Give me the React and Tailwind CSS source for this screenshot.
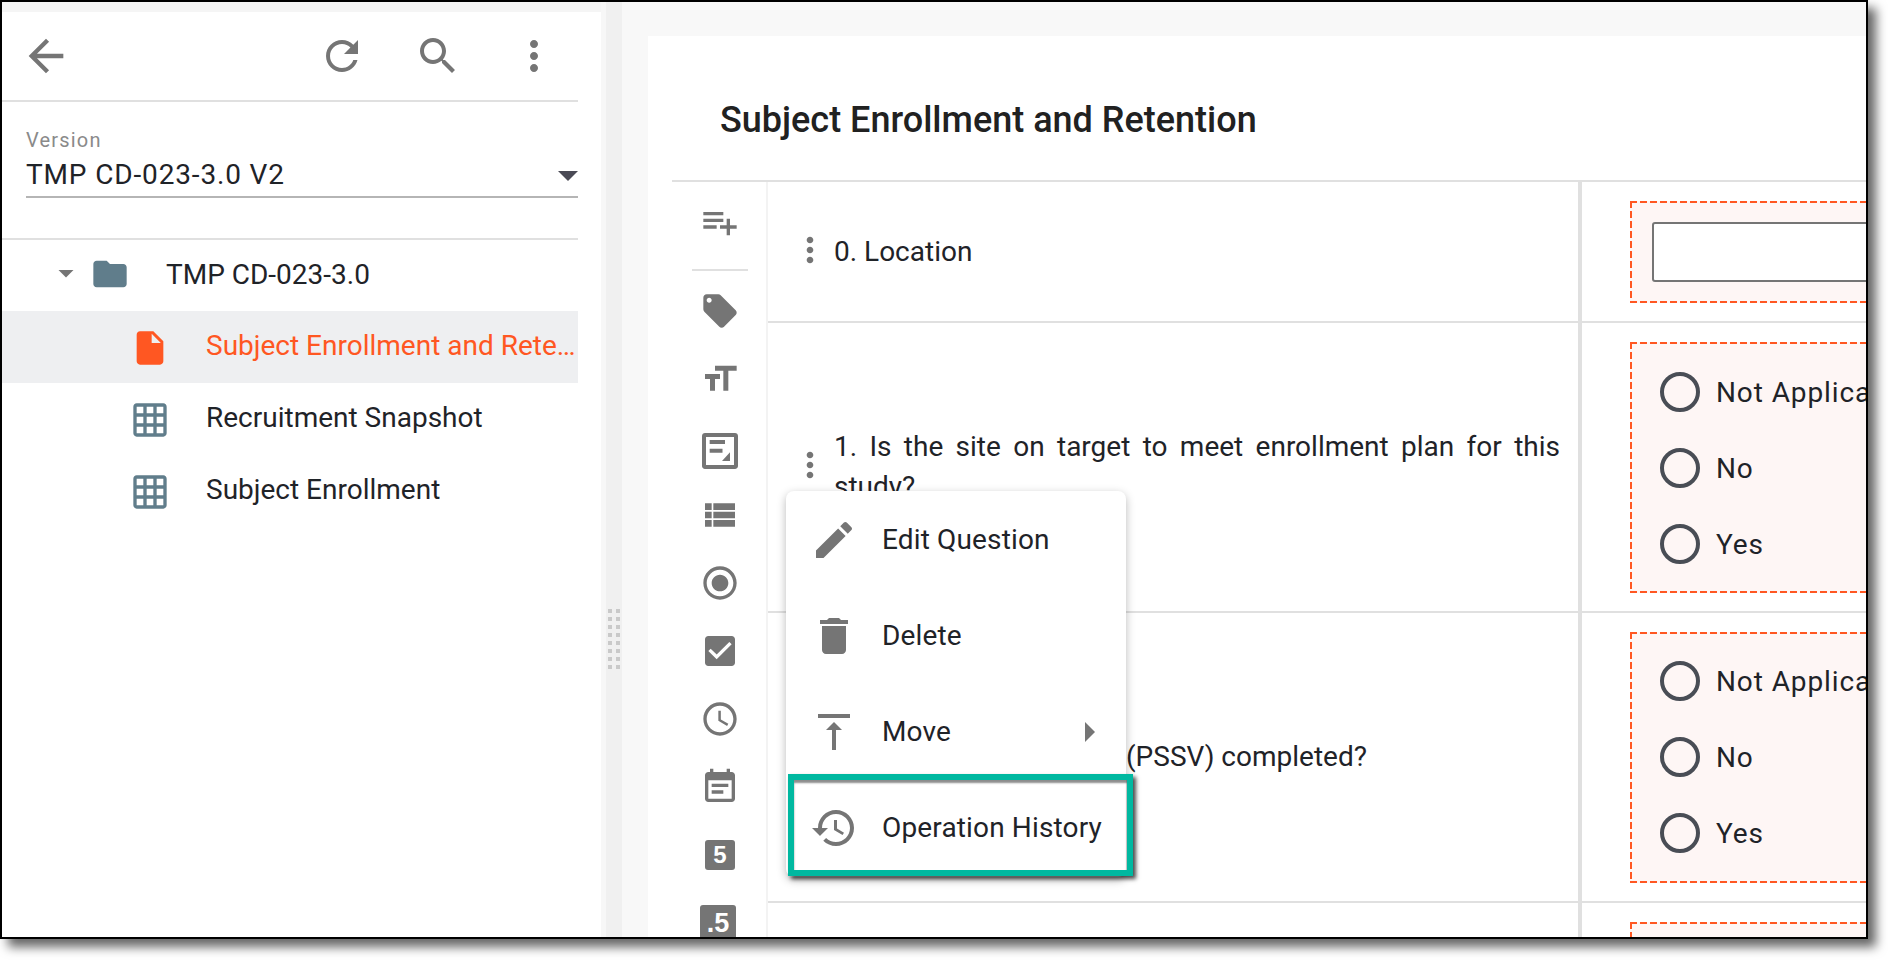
const P = {
  back: "M20 11H7.83l5.59-5.59L12 4l-8 8 8 8 1.41-1.41L7.83 13H20v-2z",
  refresh: "M17.65 6.35C16.2 4.9 14.21 4 12 4c-4.42 0-7.99 3.58-7.99 8s3.57 8 7.99 8c3.73 0 6.84-2.55 7.73-6h-2.08c-.82 2.33-3.04 4-5.65 4-3.31 0-6-2.69-6-6s2.69-6 6-6c1.66 0 3.14.69 4.22 1.78L13 11h7V4l-2.35 2.35z",
  search: "M15.5 14h-.79l-.28-.27C15.41 12.59 16 11.11 16 9.5 16 5.91 13.09 3 9.5 3S3 5.91 3 9.5 5.91 16 9.5 16c1.61 0 3.09-.59 4.23-1.57l.27.28v.79l5 4.99L20.49 19l-4.99-5zm-6 0C7.01 14 5 11.99 5 9.5S7.01 5 9.5 5 14 7.01 14 9.5 11.99 14 9.5 14z",
  more: "M12 8c1.1 0 2-.9 2-2s-.9-2-2-2-2 .9-2 2 .9 2 2 2zm0 2c-1.1 0-2 .9-2 2s.9 2 2 2 2-.9 2-2-.9-2-2-2zm0 6c-1.1 0-2 .9-2 2s.9 2 2 2 2-.9 2-2-.9-2-2-2z",
  drop: "M7 10l5 5 5-5z",
  folder: "M10 4H4c-1.1 0-1.99.9-1.99 2L2 18c0 1.1.9 2 2 2h16c1.1 0 2-.9 2-2V8c0-1.1-.9-2-2-2h-8l-2-2z",
  file: "M6 2c-1.1 0-1.99.9-1.99 2L4 20c0 1.1.89 2 1.99 2H18c1.1 0 2-.9 2-2V8l-6-6H6zm7 7V3.5L18.5 9H13z",
  grid: "M20 2H4c-1.1 0-2 .9-2 2v16c0 1.1.9 2 2 2h16c1.1 0 2-.9 2-2V4c0-1.1-.9-2-2-2zM8 20H4v-4h4v4zm0-6H4v-4h4v4zm0-6H4V4h4v4zm6 12h-4v-4h4v4zm0-6h-4v-4h4v4zm0-6h-4V4h4v4zm6 12h-4v-4h4v4zm0-6h-4v-4h4v4zm0-6h-4V4h4v4z",
  playlist: "M14 10H2v2h12v-2zm0-4H2v2h12V6zm4 8v-4h-2v4h-4v2h4v4h2v-4h4v-2h-4zM2 16h8v-2H2v2z",
  tag: "M21.41 11.58l-9-9C12.05 2.22 11.55 2 11 2H4c-1.1 0-2 .9-2 2v7c0 .55.22 1.05.59 1.42l9 9c.36.36.86.58 1.41.58.55 0 1.05-.22 1.41-.59l7-7c.37-.36.59-.86.59-1.41 0-.55-.23-1.06-.59-1.42zM5.5 7C4.67 7 4 6.33 4 5.5S4.67 4 5.5 4 7 4.67 7 5.5 6.33 7 5.5 7z",
  size: "M9 4v3h5v12h3V7h5V4H9zm-6 8h3v7h3v-7h3V9H3v3z",
  form: "M21 1.2H3c-1 0-1.8.8-1.8 1.8v18c0 1 .8 1.8 1.8 1.8h18c1 0 1.8-.8 1.8-1.8V3c0-1-.8-1.8-1.8-1.8zM20.4 20.4H3.6V3.6h16.8v16.8zM5.8 5.4H15v2.4H5.8V5.4zm0 5.2h7.7V13H5.8v-2.4zM18 12.8V18h-4.8l4.8-5.2z",
  list: "M3 14h4v-4H3v4zm0 5h4v-4H3v4zM3 9h4V5H3v4zm5 5h13v-4H8v4zm0 5h13v-4H8v4zM8 5v4h13V5H8z",
  radio: "M12 7c-2.76 0-5 2.24-5 5s2.24 5 5 5 5-2.24 5-5-2.24-5-5-5zm0-5C6.48 2 2 6.48 2 12s4.48 10 10 10 10-4.48 10-10S17.52 2 12 2zm0 18c-4.42 0-8-3.58-8-8s3.58-8 8-8 8 3.58 8 8-3.58 8-8 8z",
  check: "M19 3H5c-1.11 0-2 .9-2 2v14c0 1.1.89 2 2 2h14c1.11 0 2-.9 2-2V5c0-1.1-.89-2-2-2zm-9 14l-5-5 1.41-1.41L10 14.17l7.59-7.59L19 8l-9 9z",
  clock: "M11.99 2C6.47 2 2 6.48 2 12s4.47 10 9.99 10C17.52 22 22 17.52 22 12S17.52 2 11.99 2zM12 20c-4.42 0-8-3.58-8-8s3.58-8 8-8 8 3.58 8 8-3.58 8-8 8zm.5-13H11v6l5.25 3.15.75-1.23-4.5-2.67z",
  event: "M17 10H7v2h10v-2zm2-7h-1V1h-2v2H8V1H6v2H5c-1.11 0-1.99.9-1.99 2L3 19c0 1.1.89 2 2 2h14c1.1 0 2-.9 2-2V5c0-1.1-.9-2-2-2zm0 16H5V8h14v11zm-5-5H7v2h7v-2z",
  edit: "M3 17.25V21h3.75L17.81 9.94l-3.75-3.75L3 17.25zM20.71 7.04c.39-.39.39-1.02 0-1.41l-2.34-2.34c-.39-.39-1.02-.39-1.41 0l-1.83 1.83 3.75 3.75 1.83-1.83z",
  del: "M6 19c0 1.1.9 2 2 2h8c1.1 0 2-.9 2-2V7H6v12zM19 4h-3.5l-1-1h-5l-1 1H5v2h14V4z",
  top: "M8 11h3v10h2V11h3l-4-4-4 4zM4 3v2h16V3H4z",
  right: "M10 17l5-5-5-5v10z",
  history: "M13 3c-4.97 0-9 4.03-9 9H1l3.89 3.89.07.14L9 12H6c0-3.87 3.13-7 7-7s7 3.13 7 7-3.13 7-7 7c-1.93 0-3.68-.79-4.94-2.06l-1.42 1.42C8.27 19.99 10.51 21 13 21c4.97 0 9-4.03 9-9s-4.03-9-9-9zm-1 5v5l4.28 2.54.72-1.21-3.5-2.08V8H12z",
};

function Icon({ d, className }) {
  return (
    <svg viewBox="0 0 24 24" fill="currentColor" className={className}>
      <path d={d} />
    </svg>
  );
}

function TreeRow({ icon, iconColor, label, active }) {
  return (
    <div className={`flex h-[72px] items-center pl-[128px] pr-[2px] ${active ? "bg-[#eeeff1]" : ""}`}>
      <Icon d={icon} className={`mt-0.5 h-10 w-10 shrink-0 ${iconColor}`} />
      <span className={`ml-[36px] -mt-[3px] min-w-0 truncate text-[28px] ${active ? "text-[#ff5722]" : "text-[#1f2328]"}`}>
        {label}
      </span>
    </div>
  );
}

function LeftPanel() {
  return (
    <div className="mt-2.5 w-[599px] shrink-0 bg-white pr-[23px]">
      <div className="flex h-[88px] items-center pl-[18px] text-[#757575]">
        <Icon d={P.back} className="h-[52px] w-[52px]" />
        <div className="ml-auto flex items-center gap-12 pr-5">
          <Icon d={P.refresh} className="h-12 w-12" />
          <Icon d={P.search} className="h-12 w-12" />
          <Icon d={P.more} className="h-12 w-12" />
        </div>
      </div>
      <div className="h-0.5 bg-[#e0e0e0]" />
      <div className="h-[136px] pl-6 pt-[25px]">
        <div className="text-[20px] leading-[26px] tracking-[1.2px] text-[#8a8a8a]">Version</div>
        <div className="flex h-[45px] items-center justify-between border-b-2 border-[#b5b5b5]">
          <span className="text-[28px] tracking-[0.85px] text-[#1f2328]">TMP CD-023-3.0 V2</span>
          <Icon d={P.drop} className="-mr-3.5 h-12 w-12 shrink-0 text-[#4a4a55]" />
        </div>
      </div>
      <div className="h-0.5 bg-[#e0e0e0]" />
      <div className="flex h-[71px] items-center pl-[46px]">
        <Icon d={P.drop} className="-mt-1.5 h-9 w-9 shrink-0 text-[#757575]" />
        <Icon d={P.folder} className="ml-[6px] -mt-1 h-10 w-10 shrink-0 text-[#607d8b]" />
        <span className="-mt-0.5 ml-9 text-[28px] text-[#1f2328]">TMP CD-023-3.0</span>
      </div>
      <TreeRow icon={P.file} iconColor="text-[#ff5722]" label="Subject Enrollment and Retention" active />
      <TreeRow icon={P.grid} iconColor="text-[#607d8b]" label="Recruitment Snapshot" />
      <TreeRow icon={P.grid} iconColor="text-[#607d8b]" label="Subject Enrollment" />
    </div>
  );
}

function Splitter() {
  return (
    <div className="flex w-[21px] shrink-0 justify-center border-l-[5px] border-[#f7f7f7] bg-[#f0f0f0] pt-[607px]">
      <div className="grid h-[60px] grid-cols-2 content-start gap-1">
        {Array.from({ length: 16 }).map((_, i) => (
          <div key={i} className="h-1 w-1 bg-[#c9c9c9]" />
        ))}
      </div>
    </div>
  );
}

function ToolIcon({ d, extra = "" }) {
  return (
    <div className="flex h-[68px] items-center justify-center">
      <Icon d={d} className={`h-10 w-10 text-[#757575] ${extra}`} />
    </div>
  );
}

function NumIcon({ label, wide }) {
  return (
    <div className="flex h-[68px] items-center justify-center">
      <div
        className={`flex items-center justify-center rounded-[3px] bg-[#757575] font-['Liberation_Sans'] font-bold text-white ${
          wide ? "-ml-1 h-9 w-9 text-[27px]" : "h-[30px] w-[30px] text-[24px]"
        }`}
      >
        {label}
      </div>
    </div>
  );
}

function Toolbar() {
  return (
    <div className="w-[96px] shrink-0 border-r-2 border-[#f3f3f3] pl-0.5 pt-5">
      <div className="flex justify-center">
        <Icon d={P.playlist} className="h-10 w-10 text-[#757575]" />
      </div>
      <div className="mx-auto mb-1.5 mt-[27px] h-0.5 w-14 bg-[#e0e0e0]" />
      <ToolIcon d={P.tag} />
      <ToolIcon d={P.size} />
      <ToolIcon d={P.form} extra="translate-y-1" />
      <ToolIcon d={P.list} />
      <ToolIcon d={P.radio} />
      <ToolIcon d={P.check} />
      <ToolIcon d={P.clock} />
      <ToolIcon d={P.event} />
      <NumIcon label="5" />
      <NumIcon label=".5" wide />
    </div>
  );
}

function Radio({ label }) {
  return (
    <div className="flex h-[76px] items-center pl-7">
      <div className="h-10 w-10 shrink-0 rounded-full border-4 border-[#494d55]" />
      <span className="ml-4 mt-[2px] whitespace-nowrap text-[28px] tracking-[0.9px] text-[#1f2328]">{label}</span>
    </div>
  );
}

function Answer({ children }) {
  return (
    <div className="ml-12 w-[560px] bg-[#fef6f5] bg-[linear-gradient(90deg,#ff5722_7px,transparent_7px),linear-gradient(90deg,#ff5722_7px,transparent_7px),linear-gradient(#ff5722_7px,transparent_7px),linear-gradient(#ff5722_7px,transparent_7px)] p-0.5 [background-position:0_0,0_100%,0_0,100%_0] [background-repeat:repeat-x,repeat-x,repeat-y,repeat-y] [background-size:10px_2px,10px_2px,2px_10px,2px_10px]">
      {children}
    </div>
  );
}

function Row({ question, children }) {
  return (
    <div className="flex border-b-2 border-[#e0e0e0]">
      <div className="flex w-[810px] shrink-0 items-center pl-[22px] pr-[18px]">
        <Icon d={P.more} className="-mt-1 h-10 w-10 shrink-0 text-[#757575]" />
        <div className="ml-1 flex-1 text-justify text-[28px] leading-[40px] text-[#1f2328]">{question}</div>
      </div>
      <div className="border-l-[4px] border-[#e0e0e0] pb-[18px] pt-[19px]">{children}</div>
    </div>
  );
}

const options = ["Not Applicable", "No", "Yes"];

function Questions() {
  return (
    <div className="min-w-0 flex-1">
      <Row question="0. Location">
        <Answer>
          <div className="px-5 py-[19px]">
            <div className="h-[60px] w-[520px] rounded-[3px] border-2 border-[#757575] bg-white" />
          </div>
        </Answer>
      </Row>
      <Row question="1. Is the site on target to meet enrollment plan for this study?">
        <Answer>
          <div className="pb-[9px] pt-2.5">
            {options.map((o) => (
              <Radio key={o} label={o} />
            ))}
          </div>
        </Answer>
      </Row>
      <Row question="2. Was a Prestudy Visit (PSSV) completed?">
        <Answer>
          <div className="pb-2.5 pt-[9px]">
            {options.map((o) => (
              <Radio key={o} label={o} />
            ))}
          </div>
        </Answer>
      </Row>
      <Row question="3. Was the Site Initiation Visit completed?">
        <Answer>
          <div className="h-[200px]" />
        </Answer>
      </Row>
    </div>
  );
}

function MenuItem({ d, label, arrow }) {
  return (
    <div className="flex h-[96px] items-center pl-6 pr-[13px] text-[#757575]">
      <Icon d={d} className="h-12 w-12 shrink-0" />
      <span className="ml-6 text-[28px] tracking-[0.15px] text-[#1f2328]">{label}</span>
      {arrow && <Icon d={P.right} className="ml-auto h-12 w-12 shrink-0" />}
    </div>
  );
}

function Menu() {
  return (
    <div className="absolute left-[784px] top-[489px] w-[340px] rounded-lg bg-white py-[1px] shadow-[0_3px_10px_rgba(0,0,0,0.28)]">
      <MenuItem d={P.edit} label="Edit Question" />
      <MenuItem d={P.del} label="Delete" />
      <MenuItem d={P.top} label="Move" arrow />
      <MenuItem d={P.history} label="Operation History" />
    </div>
  );
}

export default function App() {
  return (
    <div className="h-[960px] w-[1888px] bg-white font-[Roboto,sans-serif]">
      <div className="relative flex h-[939px] w-[1868px] overflow-hidden border-2 border-black bg-[#f5f5f5] shadow-[8px_8px_10px_rgba(0,0,0,0.6)]">
        <LeftPanel />
        <Splitter />
        <div className="min-w-0 flex-1 bg-[#f8f8f8] pl-[26px] pt-[34px]">
          <div className="h-full bg-white pl-6">
            <div className="flex h-[146px] items-center border-b-2 border-[#e0e0e0] pl-12 pt-[24px]">
              <h1 className="text-[36px] font-medium text-[#212121]">Subject Enrollment and Retention</h1>
            </div>
            <div className="flex">
              <Toolbar />
              <Questions />
            </div>
          </div>
        </div>
        <Menu />
        <div className="absolute left-[786px] top-[772px] h-[102px] w-[345px] border-[6px] border-[#00b8a0] shadow-[3px_3px_4px_rgba(0,0,0,0.7),inset_0_3px_2px_rgba(0,0,0,0.45)]" />
      </div>
    </div>
  );
}
